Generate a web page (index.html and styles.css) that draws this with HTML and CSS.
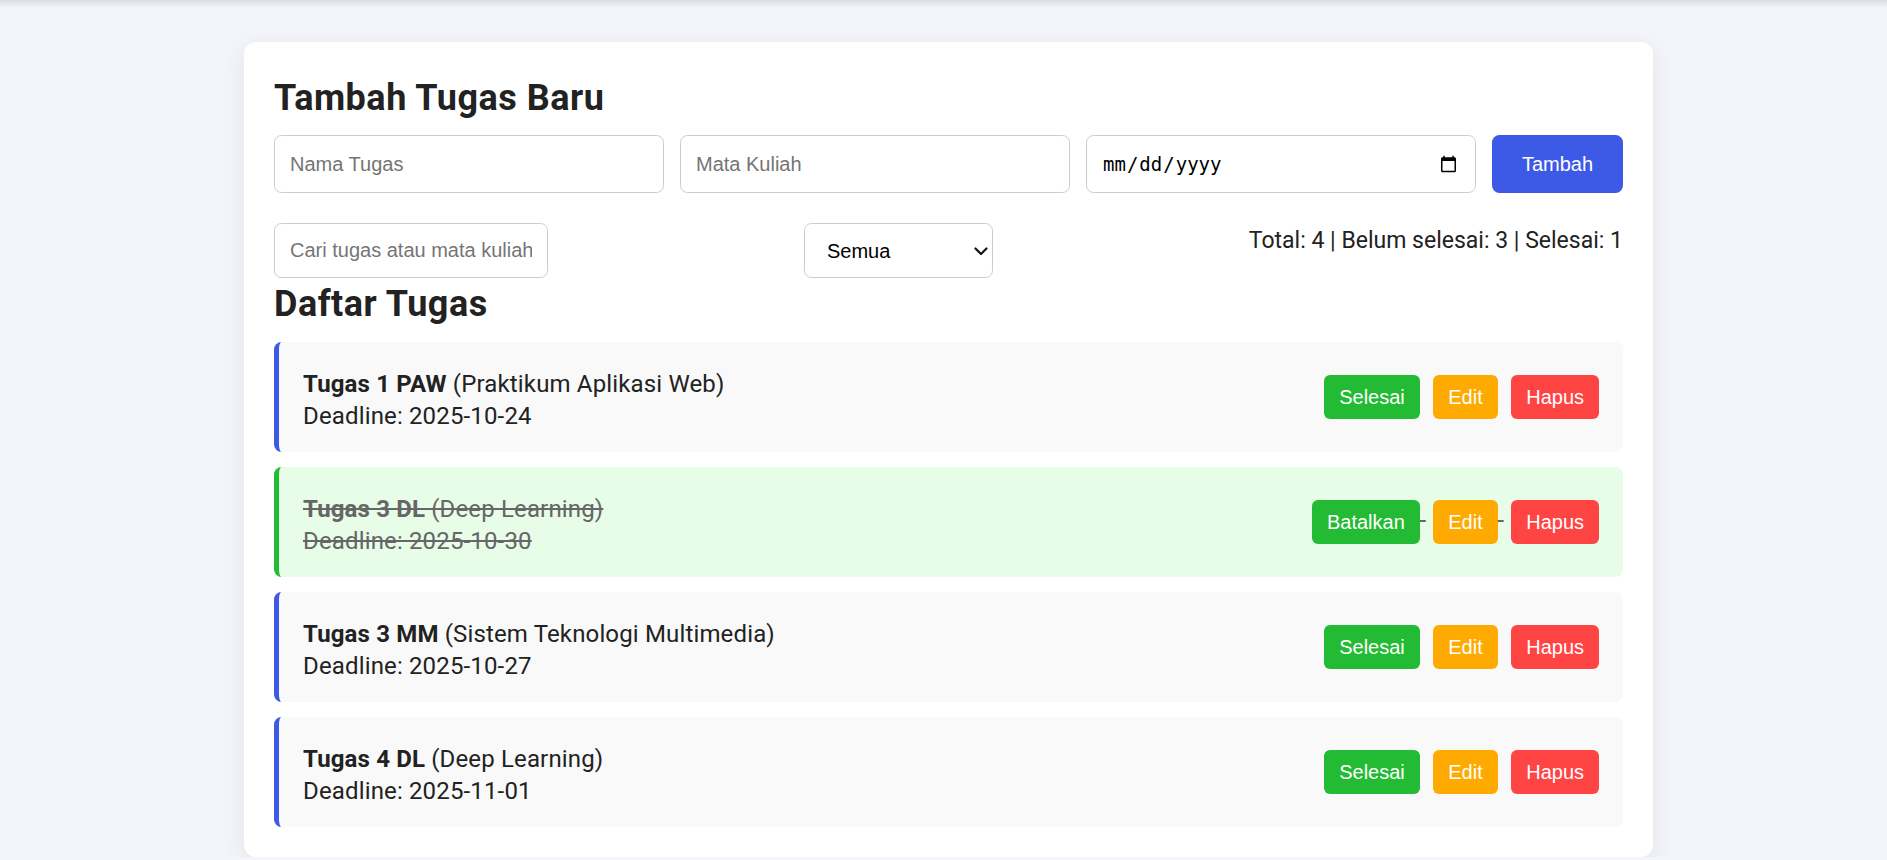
FILE: index.html
```html
<!DOCTYPE html>
<html lang="id">
<head>
<meta charset="utf-8">
<title>Daftar Tugas</title>
<link rel="stylesheet" href="styles.css">
</head>
<body>
<div class="topshade"></div>
<main class="card">
  <h2 class="title">Tambah Tugas Baru</h2>
  <form class="add-row">
    <input class="field" type="text" placeholder="Nama Tugas">
    <input class="field" type="text" placeholder="Mata Kuliah">
    <input class="field date" type="date">
    <button class="btn-add" type="button">Tambah</button>
  </form>
  <div class="filter-row">
    <input class="search" type="text" placeholder="Cari tugas atau mata kuliah">
    <div class="select-wrap">
      <select class="filter">
        <option>Semua</option>
        <option>Belum selesai</option>
        <option>Selesai</option>
      </select>
      <svg class="chev" width="14" height="9" viewBox="0 0 14 9" aria-hidden="true"><path d="M1.5 1.5 L7 7 L12.5 1.5" fill="none" stroke="#111" stroke-width="2.2" stroke-linecap="round" stroke-linejoin="round"/></svg>
    </div>
    <div class="stats">Total: 4 | Belum selesai: 3 | Selesai: 1</div>
  </div>
  <h2 class="title list-title">Daftar Tugas</h2>
  <ul class="tasks">
    <li class="task">
      <div class="info"><div><strong>Tugas 1 PAW</strong> (Praktikum Aplikasi Web)</div><div>Deadline: 2025-10-24</div></div>
      <div class="actions"><button class="btn green">Selesai</button> <button class="btn orange">Edit</button> <button class="btn red">Hapus</button></div>
    </li>
    <li class="task done">
      <div class="info"><div><strong>Tugas 3 DL</strong> (Deep Learning)</div><div>Deadline: 2025-10-30</div></div>
      <div class="actions"><button class="btn green">Batalkan</button> <button class="btn orange">Edit</button> <button class="btn red">Hapus</button></div>
    </li>
    <li class="task">
      <div class="info"><div><strong>Tugas 3 MM</strong> (Sistem Teknologi Multimedia)</div><div>Deadline: 2025-10-27</div></div>
      <div class="actions"><button class="btn green">Selesai</button> <button class="btn orange">Edit</button> <button class="btn red">Hapus</button></div>
    </li>
    <li class="task">
      <div class="info"><div><strong>Tugas 4 DL</strong> (Deep Learning)</div><div>Deadline: 2025-11-01</div></div>
      <div class="actions"><button class="btn green">Selesai</button> <button class="btn orange">Edit</button> <button class="btn red">Hapus</button></div>
    </li>
  </ul>
</main>
</body>
</html>
```

FILE: styles.css
```css
* { box-sizing: border-box; }

html, body { margin: 0; padding: 0; }

body {
  background: #f4f5fa;
  font-family: Roboto, "Noto Sans", sans-serif;
  font-size: 24px;
  line-height: 32px;
  color: #222;
}

.topshade {
  height: 8px;
  background: linear-gradient(rgba(0, 0, 0, 0.1), rgba(0, 0, 0, 0));
}

.card {
  width: 1409px;
  margin: 34px 0 0 244px;
  background: #fff;
  border-radius: 12px;
  padding: 30px 30px 30px;
  box-shadow: 0 6px 24px rgba(0, 0, 0, 0.08);
}

.title {
  font-size: 36px;
  line-height: 48px;
  font-weight: 700;
  letter-spacing: 0.5px;
  margin: 0 0 13px;
  padding-top: 2px;
}

.list-title { margin-bottom: 14px; }

.add-row {
  display: flex;
  gap: 16px;
  margin: 0;
}

.field,
.search,
.filter {
  height: 58px;
  padding: 0 15px;
  border: 1px solid #ccc;
  border-radius: 7.5px;
  background: #fff;
  font-family: "Liberation Sans", Arial, sans-serif;
  font-size: 20px;
  color: #000;
  outline: none;
}

.field { flex: 1 1 0; min-width: 0; }

.field::placeholder,
.search::placeholder { color: #757575; }

.date {
  font-family: "DejaVu Sans Mono", monospace;
  font-size: 19px;
}

.btn-add {
  width: 131px;
  height: 58px;
  border: 0;
  border-radius: 7.5px;
  background: #3d5ae6;
  color: #fff;
  font-family: "Liberation Sans", Arial, sans-serif;
  font-size: 20px;
}

.filter-row {
  display: flex;
  justify-content: space-between;
  align-items: flex-start;
  margin-top: 30px;
}

.search { width: 274px; height: 55px; }

.select-wrap { position: relative; }

.filter {
  display: block;
  width: 189px;
  height: 55px;
  padding: 0 30px 0 22px;
  appearance: none;
  -webkit-appearance: none;
}

.chev {
  position: absolute;
  right: 5px;
  top: 24px;
  pointer-events: none;
}

.stats { padding-top: 2px; font-size: 23px; }

.tasks {
  list-style: none;
  margin: 0;
  padding: 0;
  display: flex;
  flex-direction: column;
  gap: 15px;
}

.task {
  display: flex;
  align-items: center;
  justify-content: space-between;
  min-height: 110px;
  padding: 23px 24px;
  background: #f9f9f9;
  border-left: 5px solid #3d5ae6;
  border-radius: 7.5px;
}

.task.done {
  background: #e8fde8;
  border-left-color: #22bb33;
  color: #666;
  text-decoration: line-through;
}

.info { margin: 3px 0 -3px; letter-spacing: 0.15px; }

.info strong { font-weight: 700; }

.actions { white-space: nowrap; }

.btn {
  margin-left: 7.5px;
  height: 44px;
  padding: 0 15px;
  border: 0;
  border-radius: 6px;
  color: #fff;
  font-family: "Liberation Sans", Arial, sans-serif;
  font-size: 20px;
  letter-spacing: 0;
  vertical-align: baseline;
}

.green { background: #22bb33; }
.orange { background: #ffaa00; }
.red { background: #ff4444; }
```
